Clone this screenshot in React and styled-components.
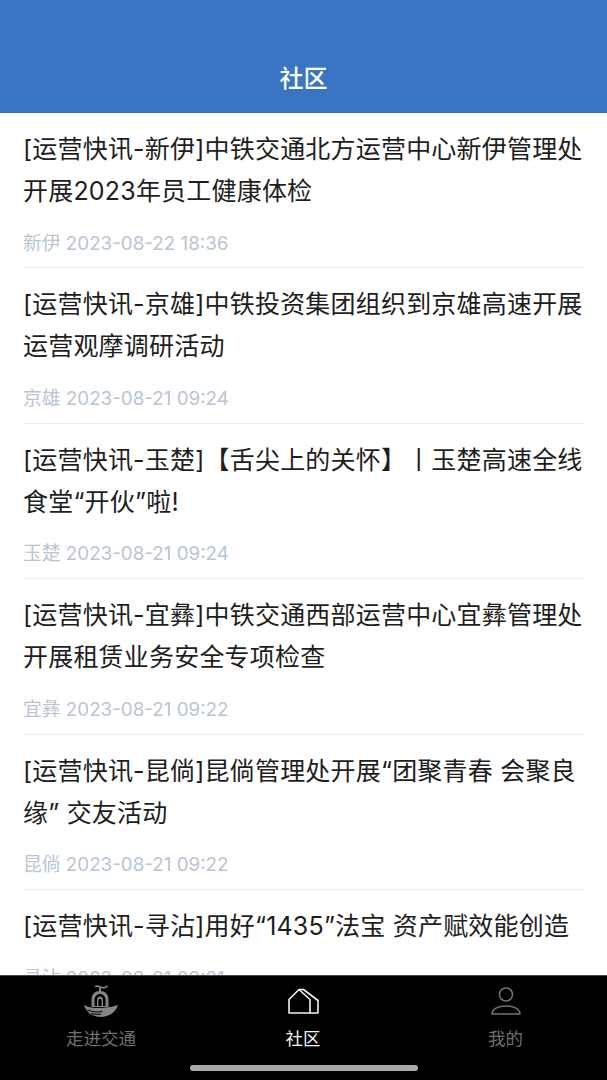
import styled, { createGlobalStyle } from 'styled-components'

const GlobalStyle = createGlobalStyle`
  html, body {
    margin: 0;
    padding: 0;
    background: #fff;
  }
  * {
    box-sizing: border-box;
  }
`

const Page = styled.div`
  width: 607px;
  height: 1080px;
  display: flex;
  flex-direction: column;
  overflow: hidden;
  font-family: Inter, "Noto Sans CJK SC", sans-serif;
`

const Header = styled.header`
  height: 113px;
  flex-shrink: 0;
  background: #3a75c4;
  color: #fff;
  font-size: 24px;
  font-weight: 500;
  line-height: 34px;
  padding-top: 62px;
  text-align: center;
`

const List = styled.main`
  flex: 1;
  min-height: 0;
  overflow: hidden;
  padding: 0 23px;
`

const Item = styled.article`
  padding: 15px 0 10.8px;
  border-bottom: 1px solid #ececec;
`

const Title = styled.div`
  font-size: 25px;
  line-height: 42px;
  letter-spacing: 0.2px;
  color: #1e1e1e;
`

const Meta = styled.div`
  margin-top: 18.6px;
  font-size: 18.8px;
  line-height: 26px;
  color: #b9c5d2;
  white-space: nowrap;
`

const TabBar = styled.nav`
  position: relative;
  height: 105px;
  flex-shrink: 0;
  background: #000;
  border-top: 1px solid #4a4a4a;
  display: grid;
  grid-template-columns: 202px 202px 203px;
`

const Tab = styled.div`
  display: flex;
  flex-direction: column;
  align-items: center;
  padding-top: 3px;
  color: ${p => (p.$active ? '#f2f2f2' : '#707070')};
`

const TabIcon = styled.div`
  width: 40px;
  height: 44px;
  display: flex;
  align-items: center;
  justify-content: center;
`

const TabLabel = styled.div`
  margin-top: 4px;
  font-size: 17.5px;
  line-height: 24px;
`

const HomeBar = styled.div`
  position: absolute;
  left: 190px;
  bottom: 9px;
  width: 228px;
  height: 6px;
  border-radius: 3px;
  background: #a9a9a9;
`

const BrandIcon = () => (
  <svg width="36" height="34" viewBox="0 0 36 34" fill="none">
    <path d="M12 2.5c3-1.500 6 1.500 9 1.300 1.600-.1 2.500-.8 3.500-2" stroke="#858585" strokeWidth="1.6" />
    <path d="M17 4v4" stroke="#858585" strokeWidth="2" />
    <path d="M8.500 23V16C8.500 10 12 7 17 7s8.500 3 8.500 9v7z" fill="#858585" />
    <path d="M11.500 22v-6c0-3.500 2.300-6 5.500-6s5.500 2.500 5.500 6v6z" fill="#000" />
    <path d="M14 22v-6c0-2.200 1.300-3.500 3-3.500s3 1.300 3 3.500v6h-1.400v-5.500c0-1-.6-1.800-1.600-1.800s-1.600.8-1.600 1.800V22z" fill="#858585" />
    <path d="M1 21c3 1 6 3 13 3 7 .2 15-1 21-3-2 7-9 12-17 12C9 33 3 28 1 21z" fill="#858585" />
    <path d="M4.500 26c5 2 10 2.500 15 1.500M8 29.500c4 1 7 1 10 .5" stroke="#000" strokeWidth="1" />
  </svg>
)

const HouseIcon = () => (
  <svg width="31" height="26" viewBox="0 0 31 26" fill="none" stroke="#f2f2f2" strokeWidth="1.6" strokeLinejoin="round">
    <path d="M1 25V11.500L11 1.500 22 11.500V25z" />
    <path d="M11 1.500h4.500L30 12.500V25H22" />
  </svg>
)

const UserIcon = () => (
  <svg width="30" height="28" viewBox="0 0 30 28" fill="none" stroke="#707070" strokeWidth="1.6">
    <circle cx="15" cy="7.500" r="6.500" />
    <path d="M1 27c0-5 6-8 14-8s14 3 14 8z" strokeLinejoin="round" />
  </svg>
)

const news = [
  { title: '[运营快讯-新伊]中铁交通北方运营中心新伊管理处开展2023年员工健康体检', place: '新伊', time: '2023-08-22 18:36' },
  { title: '[运营快讯-京雄]中铁投资集团组织到京雄高速开展运营观摩调研活动', place: '京雄', time: '2023-08-21 09:24' },
  { title: '[运营快讯-玉楚]【舌尖上的关怀】丨玉楚高速全线食堂“开伙”啦!', place: '玉楚', time: '2023-08-21 09:24' },
  { title: '[运营快讯-宜彝]中铁交通西部运营中心宜彝管理处开展租赁业务安全专项检查', place: '宜彝', time: '2023-08-21 09:22' },
  { title: '[运营快讯-昆倘]昆倘管理处开展“团聚青春 会聚良缘” 交友活动', place: '昆倘', time: '2023-08-21 09:22' },
  { title: '[运营快讯-寻沾]用好“1435”法宝 资产赋效能创造', place: '寻沾', time: '2023-08-21 09:21' },
]

export default function App() {
  return (
    <Page>
      <GlobalStyle />
      <Header>社区</Header>
      <List>
        {news.map(n => (
          <Item key={n.place}>
            <Title>{n.title}</Title>
            <Meta>{n.place} {n.time}</Meta>
          </Item>
        ))}
      </List>
      <TabBar>
        <Tab>
          <TabIcon><BrandIcon /></TabIcon>
          <TabLabel>走进交通</TabLabel>
        </Tab>
        <Tab $active>
          <TabIcon><HouseIcon /></TabIcon>
          <TabLabel>社区</TabLabel>
        </Tab>
        <Tab>
          <TabIcon><UserIcon /></TabIcon>
          <TabLabel>我的</TabLabel>
        </Tab>
        <HomeBar />
      </TabBar>
    </Page>
  )
}
